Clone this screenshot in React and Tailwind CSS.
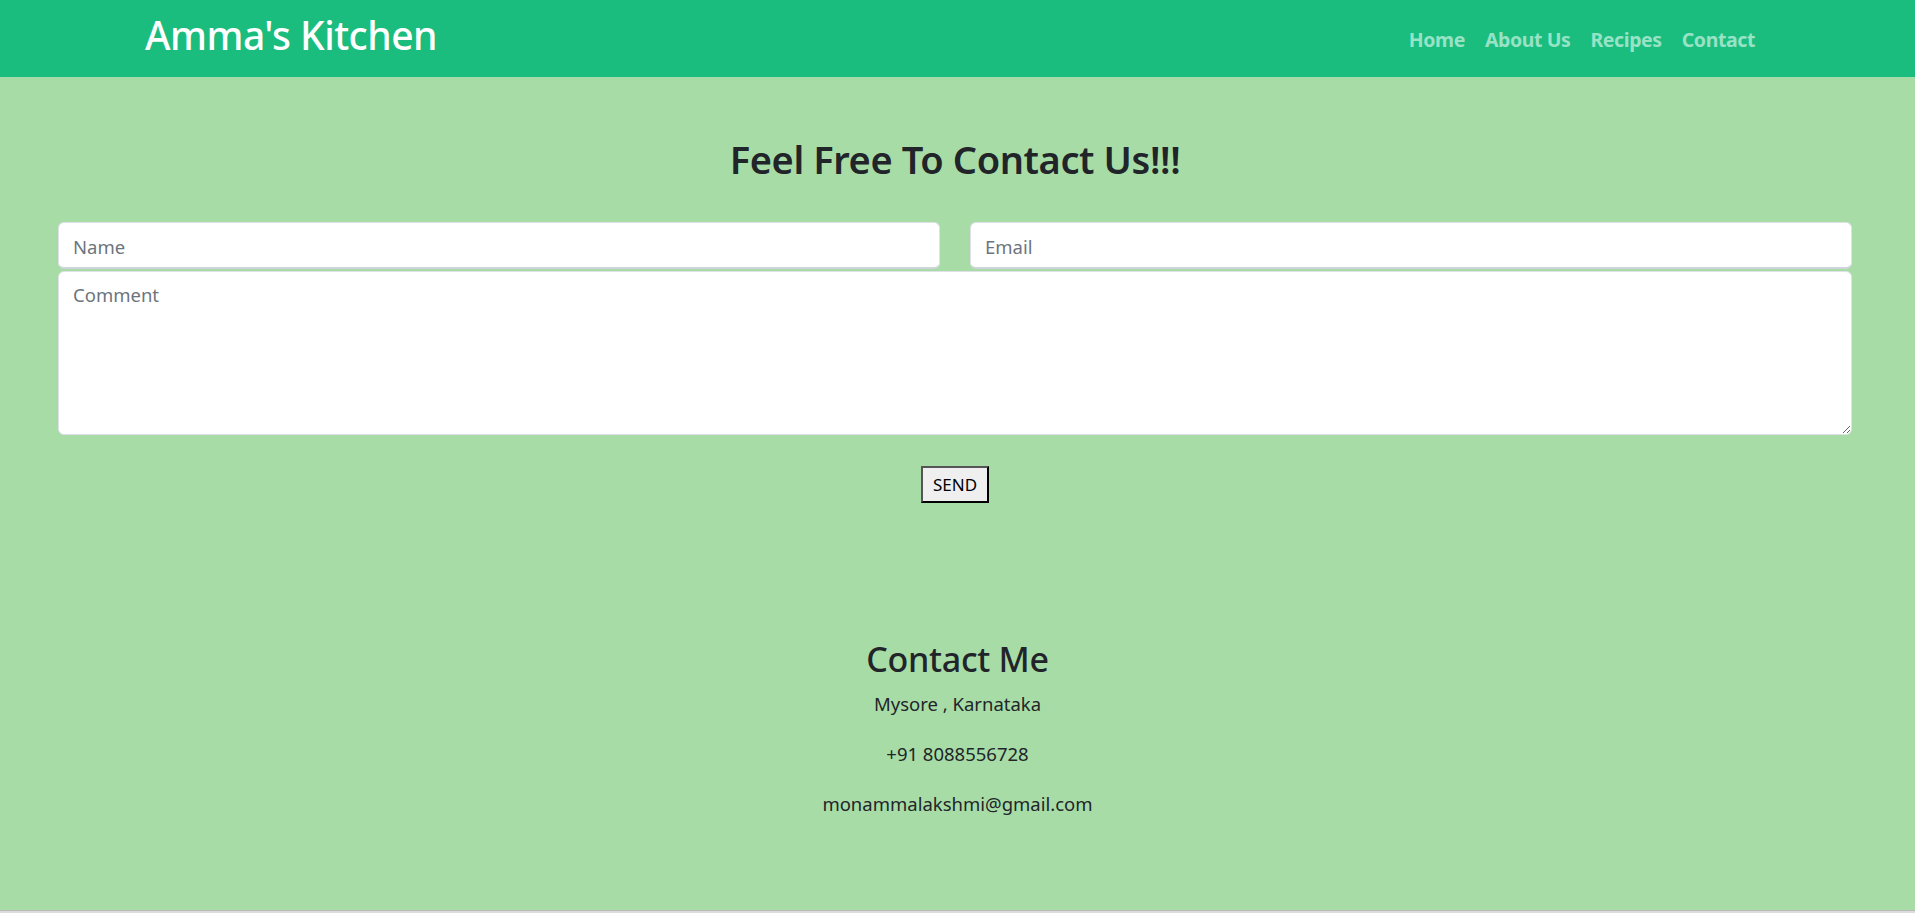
import React from 'react';

const font = { fontFamily: '"Noto Sans", "Open Sans", sans-serif' };

const Navbar = () => {
    const links = ['Home', 'About Us', 'Recipes', 'Contact'];
    return (
        <nav className="h-[77px] bg-[#1bbd7e] flex items-center justify-between pl-[145px] pr-[150px]">
            <a href="#" className="text-white text-[39px] font-medium leading-none tracking-[-0.5px] -mt-[8px]">Amma's Kitchen</a>
            <ul className="flex items-center mt-[2px]">
                {links.map((l) => (
                    <li key={l}>
                        <a href="#" className="px-[10px] text-[19.5px] font-bold text-[#98e2c6] tracking-[-0.4px]">{l}</a>
                    </li>
                ))}
            </ul>
        </nav>
    );
};

const ContactForm = () => (
    <div className="pl-[58px] pr-[63px]">
        <h1 className="text-center text-[38px] leading-[48px] font-semibold text-[#212529] tracking-[-0.4px]">Feel Free To Contact Us!!!</h1>
        <form className="mt-[39px]" onSubmit={(e) => e.preventDefault()}>
            <div className="grid grid-cols-2 gap-[30px]">
                <input type="text" placeholder="Name" className="h-[47px] bg-white rounded-md border border-[#dee2e6] border-b-2 border-b-[#ced4da] px-[14px] pt-[2px] text-[18.5px] text-[#212529] placeholder:text-[#6c757d] outline-none" />
                <input type="email" placeholder="Email" className="h-[47px] bg-white rounded-md border border-[#dee2e6] border-b-2 border-b-[#ced4da] px-[14px] pt-[2px] text-[18.5px] text-[#212529] placeholder:text-[#6c757d] outline-none" />
            </div>
            <textarea placeholder="Comment" className="block w-full h-[164px] mt-[2px] bg-white rounded-md border border-[#dee2e6] px-[14px] py-[9px] text-[18.5px] text-[#212529] placeholder:text-[#6c757d] outline-none"></textarea>
            <div className="flex justify-center mt-[31px]">
                <button type="submit" className="w-[68px] h-[37px] bg-[#efefef] border-2 border-[#555] border-r-black border-b-black text-[17px] text-black">SEND</button>
            </div>
        </form>
    </div>
);

const ContactInfo = () => (
    <div className="mt-[136px] flex flex-col items-center text-[#212529]">
        <h2 className="text-[34px] font-medium leading-[40px] tracking-[-0.3px]">Contact Me</h2>
        <p className="mt-[12px] text-[18.5px] leading-[26px]">Mysore , Karnataka</p>
        <p className="mt-[24px] text-[18.5px] leading-[26px]">+91 8088556728</p>
        <p className="mt-[24px] text-[18.5px] leading-[26px]">monammalakshmi@gmail.com</p>
    </div>
);

export default function App() {
    return (
        <div className="min-h-[913px] bg-[#dcdcdc]" style={font}>
            <Navbar />
            <main className="h-[834px] bg-[#a8dca7] border-b border-[#b9b9b9] pt-[58px]">
                <ContactForm />
                <ContactInfo />
            </main>
        </div>
    );
}
